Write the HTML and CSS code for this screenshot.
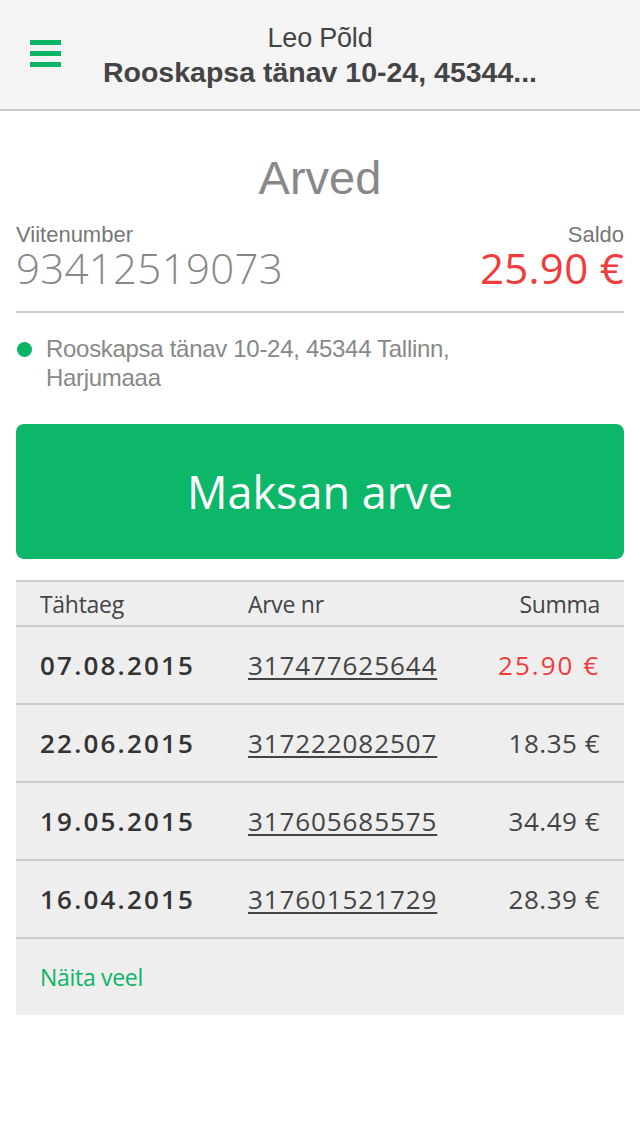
FILE: index.html
```html
<!DOCTYPE html>
<html lang="et">
<head>
    <meta charset="UTF-8">
    <meta name="viewport" content="width=device-width, initial-scale=1.0">
    <title>Arved</title>
    <link rel="stylesheet" href="styles.css">
</head>
<body>
    <header class="topbar">
        <button class="menu-btn" aria-label="Menüü">
            <span></span><span></span><span></span>
        </button>
        <div class="topbar-title">
            <div class="topbar-name">Leo Põld</div>
            <div class="topbar-address">Rooskapsa tänav 10-24, 45344...</div>
        </div>
    </header>

    <main class="content">
        <h1 class="page-title">Arved</h1>

        <div class="summary">
            <div class="summary-col">
                <div class="summary-label">Viitenumber</div>
                <div class="summary-value">93412519073</div>
            </div>
            <div class="summary-col summary-right">
                <div class="summary-label">Saldo</div>
                <div class="summary-value debt">25.90 €</div>
            </div>
        </div>

        <div class="place">
            <span class="place-dot"></span>
            <span class="place-text">Rooskapsa tänav 10-24, 45344 Tallinn, Harjumaaa</span>
        </div>

        <button class="pay-btn">Maksan arve</button>

        <div class="bills">
            <div class="bills-row bills-head">
                <div>Tähtaeg</div>
                <div>Arve nr</div>
                <div class="amount">Summa</div>
            </div>
            <div class="bills-row">
                <div class="date">07.08.2015</div>
                <div><a href="#" class="bill-no">317477625644</a></div>
                <div class="amount debt">25.90 €</div>
            </div>
            <div class="bills-row">
                <div class="date">22.06.2015</div>
                <div><a href="#" class="bill-no">317222082507</a></div>
                <div class="amount">18.35 €</div>
            </div>
            <div class="bills-row">
                <div class="date">19.05.2015</div>
                <div><a href="#" class="bill-no">317605685575</a></div>
                <div class="amount">34.49 €</div>
            </div>
            <div class="bills-row">
                <div class="date">16.04.2015</div>
                <div><a href="#" class="bill-no">317601521729</a></div>
                <div class="amount">28.39 €</div>
            </div>
            <div class="bills-more">
                <a href="#">Näita veel</a>
            </div>
        </div>
    </main>
</body>
</html>
```

FILE: styles.css
```css
body {
    margin: 0;
    padding: 0;
    background: #ffffff;
    font-family: "Liberation Sans", Arial, sans-serif;
    color: #444;
}
.topbar {
    height: 109px;
    background: #f4f4f4;
    border-bottom: 2px solid #cccccc;
    display: flex;
    align-items: center;
    position: relative;
}
.menu-btn {
    position: absolute;
    left: 30px;
    top: 40px;
    width: 31px;
    padding: 0;
    border: none;
    background: none;
    display: flex;
    flex-direction: column;
    gap: 6px;
}
.menu-btn span {
    display: block;
    height: 5px;
    background: #0bb566;
}
.topbar-title {
    flex: 1;
    text-align: center;
    padding-top: 2px;
}
.topbar-name {
    font-size: 27px;
    line-height: 32px;
    color: #444;
    letter-spacing: -0.2px;
}
.topbar-address {
    font-size: 28.5px;
    line-height: 36px;
    font-weight: bold;
    color: #444;
}
.content {
    padding: 0 16px;
}
.page-title {
    margin: 0;
    padding-top: 36px;
    text-align: center;
    font-weight: normal;
    font-size: 47px;
    line-height: 62px;
    color: #888;
}
.summary {
    display: flex;
    justify-content: space-between;
    padding-top: 13px;
    padding-bottom: 23px;
    border-bottom: 2px solid #cccccc;
}
.summary-right {
    text-align: right;
}
.summary-label {
    font-size: 22px;
    line-height: 26px;
    color: #777;
}
.summary-value {
    font-family: "Open Sans", "Liberation Sans", sans-serif;
    font-weight: 300;
    font-size: 42px;
    line-height: 40px;
    letter-spacing: 0.3px;
    color: #888;
}
.summary-value.debt {
    font-weight: 400;
    color: #f03c3c;
}
.place {
    display: flex;
    align-items: flex-start;
    gap: 14px;
    padding-top: 21px;
}
.place-dot {
    flex: none;
    width: 15px;
    height: 15px;
    margin-top: 8px;
    margin-left: 1px;
    border-radius: 50%;
    background: #0bb566;
}
.place-text {
    font-size: 24px;
    line-height: 29px;
    color: #888;
    width: 460px;
    letter-spacing: -0.3px;
}
.pay-btn {
    display: block;
    width: 100%;
    height: 135px;
    margin-top: 32px;
    border: none;
    border-radius: 8px;
    background: #0cb769;
    color: #ffffff;
    font-family: "Open Sans", sans-serif;
    font-size: 45px;
    cursor: pointer;
}
.bills {
    margin-top: 21px;
    background: #eeeeee;
    border-top: 2px solid #cccccc;
    font-family: "Open Sans", sans-serif;
}
.bills-row {
    display: grid;
    grid-template-columns: 208px 1fr 150px;
    align-items: center;
    height: 76px;
    padding: 0 24px;
    border-bottom: 2px solid #cccccc;
    font-size: 26px;
    color: #444;
}
.bills-head {
    height: 43px;
    font-size: 23px;
    letter-spacing: -0.3px;
}
.date {
    font-weight: 600;
    letter-spacing: 2.2px;
    color: #333;
}
.bill-no {
    color: #444;
    letter-spacing: 0.9px;
    text-decoration: underline;
    text-underline-offset: 3px;
}
.amount {
    text-align: right;
    letter-spacing: 0.5px;
}
.bills-head .amount {
    letter-spacing: -0.3px;
}
.amount.debt {
    color: #f03c3c;
    letter-spacing: 2px;
}
.bills-more {
    height: 76px;
    padding: 0 24px;
    display: flex;
    align-items: center;
    font-size: 23px;
    letter-spacing: -0.3px;
}
.bills-more a {
    color: #0bb566;
    text-decoration: none;
}
```
